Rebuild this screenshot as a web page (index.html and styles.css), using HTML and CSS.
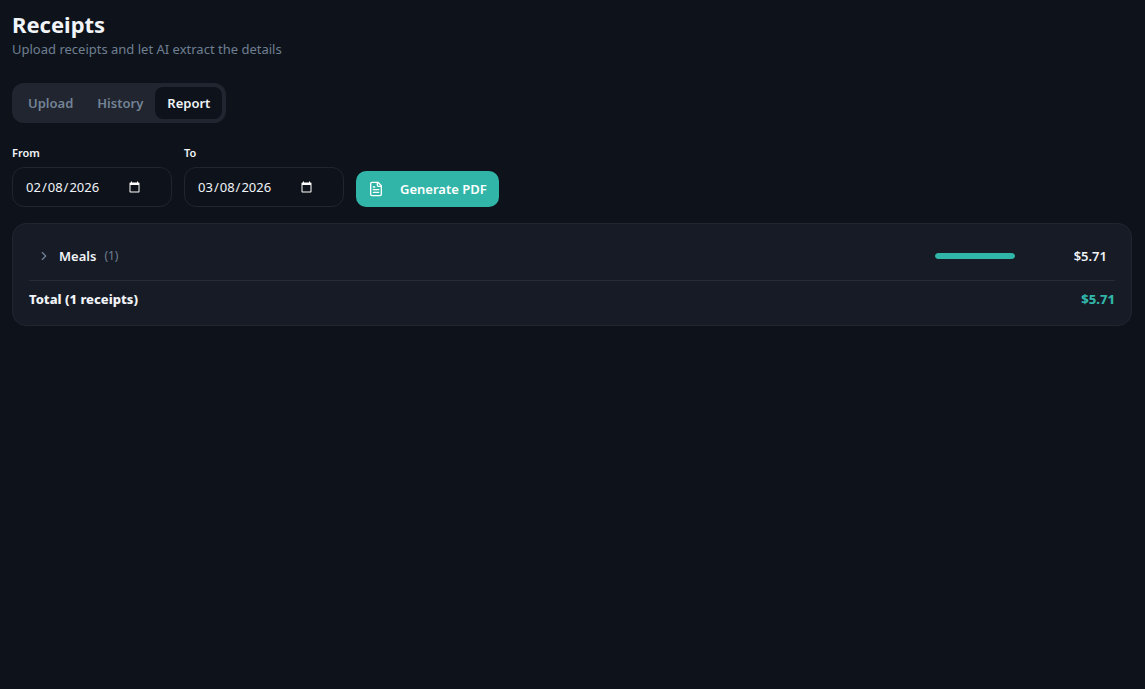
FILE: index.html
```html
<!DOCTYPE html>
<html lang="en">
<head>
    <meta charset="utf-8">
    <meta name="viewport" content="width=device-width, initial-scale=1">
    <title>Receipts</title>
    <link rel="stylesheet" href="styles.css">
</head>
<body>
    <main class="page">
        <header class="page-header">
            <h1>Receipts</h1>
            <p>Upload receipts and let AI extract the details</p>
        </header>

        <div class="tabs" role="tablist">
            <button type="button" class="tab" role="tab" aria-selected="false">Upload</button>
            <button type="button" class="tab" role="tab" aria-selected="false">History</button>
            <button type="button" class="tab active" role="tab" aria-selected="true">Report</button>
        </div>

        <form class="filters">
            <div class="field">
                <label for="from">From</label>
                <input type="date" id="from" value="2026-02-08">
            </div>
            <div class="field">
                <label for="to">To</label>
                <input type="date" id="to" value="2026-03-08">
            </div>
            <button type="button" class="generate-btn">
                <svg class="icon" viewBox="0 0 24 24" aria-hidden="true">
                    <path d="M15 2H6a2 2 0 0 0-2 2v16a2 2 0 0 0 2 2h12a2 2 0 0 0 2-2V7Z"/>
                    <path d="M14 2v4a2 2 0 0 0 2 2h4"/>
                    <path d="M10 9H8"/>
                    <path d="M16 13H8"/>
                    <path d="M16 17H8"/>
                </svg>
                Generate PDF
            </button>
        </form>

        <section class="card">
            <button type="button" class="category" aria-expanded="false">
                <svg class="chevron" viewBox="0 0 24 24" aria-hidden="true">
                    <path d="m9 18 6-6-6-6"/>
                </svg>
                <span class="category-name">Meals</span>
                <span class="category-count">(1)</span>
                <span class="bar"><span class="bar-fill" style="width: 100%"></span></span>
                <span class="category-amount">$5.71</span>
            </button>
            <div class="total">
                <span>Total (1 receipts)</span>
                <span class="total-amount">$5.71</span>
            </div>
        </section>
    </main>
</body>
</html>
```

FILE: styles.css
```css
* {
    box-sizing: border-box;
}

body {
    background: #0e131b;
    color: #f1f4f8;
    font-family: "Segoe UI", "Noto Sans", "Open Sans", sans-serif;
    font-size: 13px;
    line-height: 20px;
    margin: 0;
    color-scheme: dark;
}

button,
input {
    font: inherit;
    color: inherit;
}

button {
    border: none;
    cursor: pointer;
}

.page {
    display: flex;
    flex-direction: column;
    padding: 9px 13px 12px 12px;
}

.page-header h1 {
    margin: 0;
    font-size: 22px;
    line-height: 30px;
    font-weight: 700;
}

.page-header p {
    margin: 0;
    color: #6f7f92;
}

/* Tabs */
.tabs {
    display: flex;
    align-self: flex-start;
    margin-top: 24px;
    padding: 4px;
    background: #21252f;
    border-radius: 12px;
}

.tab {
    padding: 6px 12px;
    background: none;
    border-radius: 8px;
    font-weight: 600;
    color: #738396;
}

    .tab.active {
        background: #0e131b;
        color: #f1f4f8;
    }

/* Filters */
.filters {
    display: flex;
    align-items: flex-end;
    gap: 12px;
    margin-top: 22px;
}

.field label {
    display: block;
    margin-bottom: 6px;
    font-size: 11px;
    line-height: 16px;
    font-weight: 600;
}

.field input {
    display: flex;
    width: 160px;
    height: 40px;
    padding: 8px 12px;
    background: #0e131b;
    border: 1px solid #21252f;
    border-radius: 12px;
}

.generate-btn {
    display: flex;
    align-items: center;
    gap: 16px;
    height: 36px;
    padding: 0 12px;
    background: #31b5a8;
    border-radius: 10px;
    color: #fff;
    font-weight: 600;
}

.icon,
.chevron {
    width: 16px;
    height: 16px;
    flex-shrink: 0;
    fill: none;
    stroke: currentColor;
    stroke-width: 2;
    stroke-linecap: round;
    stroke-linejoin: round;
}

/* Report */
.card {
    margin-top: 16px;
    padding: 12px 16px 16px;
    background: #171b25;
    border: 1px solid #21252f;
    border-radius: 14px;
}

.category {
    display: flex;
    align-items: center;
    width: 100%;
    padding: 10px 8px;
    background: none;
    text-align: left;
}

.chevron {
    width: 14px;
    height: 14px;
    margin-right: 8px;
    color: #738396;
}

.category-name {
    font-weight: 600;
}

.category-count {
    margin-left: 8px;
    font-size: 12px;
    color: #6f7f92;
}

.bar {
    width: 80px;
    height: 6px;
    margin-left: auto;
    background: #21252f;
    border-radius: 3px;
    overflow: hidden;
}

.bar-fill {
    display: block;
    height: 100%;
    background: #31b5a8;
    border-radius: 3px;
}

.category-amount {
    width: 92px;
    font-weight: 600;
    text-align: right;
}

.total {
    display: flex;
    justify-content: space-between;
    margin-top: 4px;
    padding-top: 8px;
    border-top: 1px solid #262b36;
    font-weight: 800;
}

.total-amount {
    color: #31b5a8;
}
```
